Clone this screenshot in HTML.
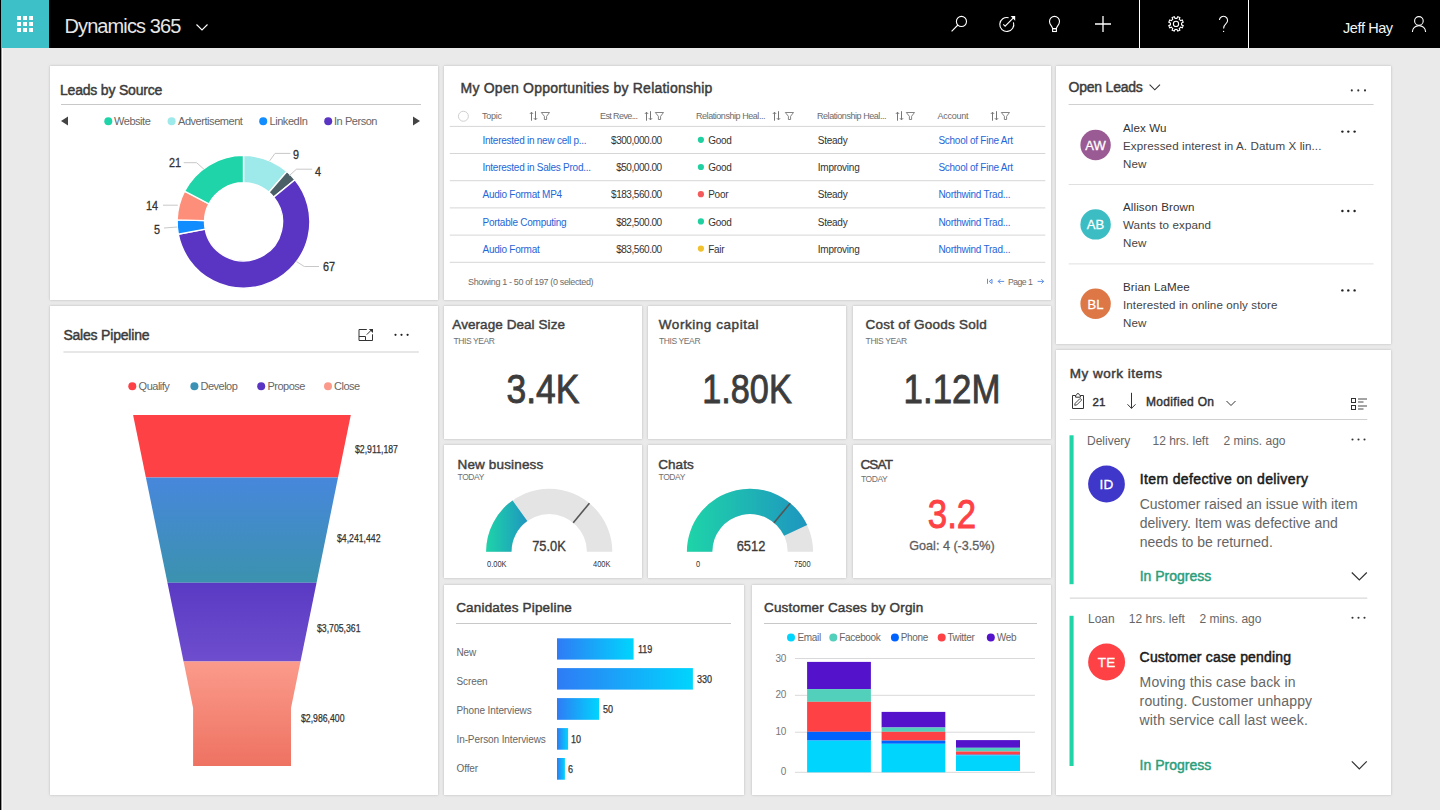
<!DOCTYPE html>
<html><head><meta charset="utf-8">
<style>
*{margin:0;padding:0;box-sizing:border-box}
html,body{width:1440px;height:810px;overflow:hidden;background:#eaeaea;font-family:"Liberation Sans",sans-serif;color:#333}
.abs{position:absolute}
#top{position:absolute;left:0;top:0;width:1440px;height:48px;background:#000}
#launch{position:absolute;left:1px;top:0;width:48px;height:48px;background:#3dc0c8}
.p{position:absolute;background:#fff;box-shadow:0 0 1px rgba(0,0,0,0.12),0 0 3px rgba(0,0,0,0.14)}
.t{position:absolute;white-space:nowrap}
.ttl{font-size:14px;font-weight:400;color:#3b3b3b;letter-spacing:-0.2px;line-height:18px;-webkit-text-stroke:0.45px #3b3b3b}
.hr{height:1px;background:#c8c8c8}
.lg{font-size:11px;color:#666;letter-spacing:-0.45px;line-height:13px}
.th{font-size:9px;color:#6b6b6b;letter-spacing:-0.25px;line-height:12px}
.td{font-size:10px;color:#333;letter-spacing:-0.25px;line-height:12px}
.num{letter-spacing:-0.45px}
.lk{color:#2566d8}
.ft{font-size:9px;color:#6b6b6b;letter-spacing:-0.35px;line-height:12px}
.av{font-size:13px;color:#fff;text-align:center;line-height:15px;letter-spacing:0.2px;-webkit-text-stroke:0.3px #fff}
.ld{font-size:11.6px;color:#444;line-height:14px;letter-spacing:0.1px}
.fl{font-size:10px;color:#333;line-height:12px;transform:scaleX(0.87) translateY(1px);transform-origin:0 0;-webkit-text-stroke:0.25px #333}
.kt{font-size:13.5px;font-weight:400;color:#3f3f3f;letter-spacing:0.07px;line-height:16px;-webkit-text-stroke:0.45px #3f3f3f}
.ks{font-size:8.5px;color:#707070;letter-spacing:-0.4px;line-height:10px}
.kn{width:198px;text-align:center;font-size:41px;color:#3c3c3c;line-height:46px;transform:scaleX(0.865);-webkit-text-stroke:0.9px currentColor}
.gv{font-size:15.5px;color:#3a3a3a;line-height:18px;-webkit-text-stroke:0.35px #3a3a3a;transform:translateX(-50%) scaleX(0.83)}
.gl{font-size:8.5px;color:#333;line-height:10px;transform:scaleX(0.88);transform-origin:0 0}
.cl{font-size:10px;color:#666;line-height:12px;letter-spacing:-0.1px}
.cv{font-size:10px;color:#333;line-height:12px;transform:scaleX(0.9);transform-origin:0 0;-webkit-text-stroke:0.25px #333}
.lg2{font-size:10px;color:#666;line-height:13px;letter-spacing:-0.35px}
.ax{font-size:10px;color:#777;line-height:12px;letter-spacing:-0.3px}
.wm{font-size:12px;color:#666;line-height:15px}
.wt{font-size:14px;font-weight:400;color:#1a1a1a;line-height:17px;-webkit-text-stroke:0.5px #1a1a1a}
.wd{font-size:14px;color:#666;line-height:18.9px}
.wp{font-size:14px;font-weight:400;color:#2b9e7b;line-height:17px;letter-spacing:0;-webkit-text-stroke:0.45px #2b9e7b}
.dl{font-size:12px;color:#333;line-height:14px;transform:scaleX(0.9) translateY(0.8px);transform-origin:0 0;-webkit-text-stroke:0.3px #333}
</style></head><body>
<div id="top">
  <div id="launch">
    <svg class="abs" style="left:15px;top:16px" width="17" height="17" viewBox="0 0 17 17" fill="#fff">
      <rect x="1" y="0" width="4" height="4"/><rect x="7" y="0" width="4" height="4"/><rect x="13" y="0" width="4" height="4"/>
      <rect x="1" y="6" width="4" height="4"/><rect x="7" y="6" width="4" height="4"/><rect x="13" y="6" width="4" height="4"/>
      <rect x="1" y="12" width="4" height="4"/><rect x="7" y="12" width="4" height="4"/><rect x="13" y="12" width="4" height="4"/>
    </svg>
  </div>
  <div class="t" style="left:64.5px;top:12.5px;font-size:20px;letter-spacing:-0.9px;color:#e6e6e6;line-height:26px">Dynamics 365</div>
  <svg class="abs" style="left:0;top:0" width="1440" height="48" fill="none" stroke="#fff" stroke-width="1.1">
    <path d="M196.5 24.5 L202 30 L207.5 24.5"/>
    <circle cx="961.45" cy="21.45" r="5.05"/><path d="M957.9 25 L951.6 31.3"/>
    <path d="M1013.45 22.3 A7 7 0 1 1 1008.6 17.7"/><path d="M1003.3 24.3 L1005.1 26.1 L1013.6 17.6"/><path d="M1010.6 16.1 L1015.2 16.1 L1015.2 20.7 Z" fill="#fff" stroke="none"/>
    <path d="M1052.6 28.6 C1052.6 26.4 1049.5 24.9 1049.5 21.4 A5 5 0 0 1 1059.5 21.4 C1059.5 24.9 1056.4 26.4 1056.4 28.6 Z"/><rect x="1052.6" y="28.6" width="3.8" height="2.9"/>
    <path d="M1095 24 H1111 M1103 16 V32" stroke-width="1.3"/>
    <path d="M1139.5 0 V48 M1248.5 0 V48" stroke-width="1"/>
    <path d="M1176.00 18.30 L1176.92 18.38 L1177.73 16.70 L1179.87 17.59 L1179.25 19.34 L1179.96 19.94 L1180.56 20.65 L1182.31 20.03 L1183.20 22.17 L1181.52 22.98 L1181.60 23.90 L1181.52 24.82 L1183.20 25.63 L1182.31 27.77 L1180.56 27.15 L1179.96 27.86 L1179.25 28.46 L1179.87 30.21 L1177.73 31.10 L1176.92 29.42 L1176.00 29.50 L1175.08 29.42 L1174.27 31.10 L1172.13 30.21 L1172.75 28.46 L1172.04 27.86 L1171.44 27.15 L1169.69 27.77 L1168.80 25.63 L1170.48 24.82 L1170.40 23.90 L1170.48 22.98 L1168.80 22.17 L1169.69 20.03 L1171.44 20.65 L1172.04 19.94 L1172.75 19.34 L1172.13 17.59 L1174.27 16.70 L1175.08 18.38 Z"/><circle cx="1176" cy="23.9" r="2.6"/>
    <path d="M1219.4 20 A4.1 4.1 0 1 1 1226 23.6 C1224.2 25.2 1223.6 26 1223.6 28.6"/><circle cx="1223.6" cy="31.4" r="0.65" fill="#fff" stroke="none"/>
    <circle cx="1418.9" cy="20.9" r="4.3"/><path d="M1412.4 31.9 A6.6 6.3 0 0 1 1425.6 31.9"/>
  </svg>
  <div class="t" style="left:1343px;top:18.5px;font-size:14.5px;letter-spacing:-0.4px;color:#f5f5f5;line-height:18px">Jeff Hay</div>
</div>

<!-- panels -->
<div class="abs" style="left:0;top:48px;width:1px;height:762px;background:#000"></div>
<div class="abs" style="left:1px;top:48px;width:1px;height:762px;background:#9a9a9a"></div>
<div class="abs" style="left:2px;top:48px;width:1px;height:762px;background:#fbfbfb"></div>
<div class="p" id="p-leads" style="left:50px;top:66px;width:388px;height:234px"></div>
<div class="p" id="p-opps" style="left:444px;top:66px;width:607px;height:234px"></div>
<div class="p" id="p-open" style="left:1056px;top:66px;width:335px;height:278px"></div>
<div class="p" id="p-sales" style="left:50px;top:306px;width:388px;height:489px"></div>
<div class="p" id="p-k1" style="left:444px;top:306px;width:198px;height:133px"></div>
<div class="p" id="p-k2" style="left:648px;top:306px;width:198px;height:133px"></div>
<div class="p" id="p-k3" style="left:853px;top:306px;width:198px;height:133px"></div>
<div class="p" id="p-g1" style="left:444px;top:445px;width:198px;height:133px"></div>
<div class="p" id="p-g2" style="left:648px;top:445px;width:198px;height:133px"></div>
<div class="p" id="p-g3" style="left:853px;top:445px;width:198px;height:133px"></div>
<div class="p" id="p-cand" style="left:444px;top:585px;width:300px;height:210px"></div>
<div class="p" id="p-cases" style="left:752px;top:585px;width:299px;height:210px"></div>
<div class="p" id="p-work" style="left:1056px;top:350px;width:335px;height:445px"></div>


<!-- LEADS BY SOURCE -->
<div class="t ttl" style="left:60px;top:81px">Leads by Source</div>
<div class="abs hr" style="left:61px;top:104px;width:360px"></div>
<svg class="abs" style="left:0;top:0" width="440" height="300">
  <path d="M61 121 L68 116.5 V125.5 Z" fill="#444"/>
  <path d="M420 121 L413 116.5 V125.5 Z" fill="#444"/>
  <circle cx="108.3" cy="121.3" r="4" fill="#1ed4a8"/>
  <circle cx="171.6" cy="121.3" r="4" fill="#9ee9e9"/>
  <circle cx="263.2" cy="121.3" r="4" fill="#118dff"/>
  <circle cx="328.2" cy="121.3" r="4" fill="#5a35c4"/>
  <path d="M243.50 155.40 A66.4 66.4 0 0 1 286.89 171.54 L268.98 192.28 A39.0 39.0 0 0 0 243.50 182.80 Z" fill="#9ee9e9" stroke="#fff" stroke-width="1.4"/>
<path d="M286.89 171.54 A66.4 66.4 0 0 1 294.96 179.83 L273.72 197.15 A39.0 39.0 0 0 0 268.98 192.28 Z" fill="#4a5f66" stroke="#fff" stroke-width="1.4"/>
<path d="M294.96 179.83 A66.4 66.4 0 1 1 178.28 234.24 L205.19 229.11 A39.0 39.0 0 1 0 273.72 197.15 Z" fill="#5a35c4" stroke="#fff" stroke-width="1.4"/>
<path d="M178.28 234.24 A66.4 66.4 0 0 1 177.13 219.83 L204.52 220.64 A39.0 39.0 0 0 0 205.19 229.11 Z" fill="#118dff" stroke="#fff" stroke-width="1.4"/>
<path d="M177.13 219.83 A66.4 66.4 0 0 1 184.55 191.24 L208.88 203.85 A39.0 39.0 0 0 0 204.52 220.64 Z" fill="#fd8f7a" stroke="#fff" stroke-width="1.4"/>
<path d="M184.55 191.24 A66.4 66.4 0 0 1 243.50 155.40 L243.50 182.80 A39.0 39.0 0 0 0 208.88 203.85 Z" fill="#1ed4a8" stroke="#fff" stroke-width="1.4"/>
  <g fill="none" stroke="#c8c8c8" stroke-width="1">
    <path d="M269.7 160.8 L275 153.4 H290.4"/>
    <path d="M289.4 175.6 L296.4 169.2 H312.2"/>
    <path d="M296.4 261.5 L304.3 266.5 H319"/>
    <path d="M203.9 169.2 L196.6 162.7 H183.7"/>
    <path d="M177.8 205.2 H163"/>
    <path d="M177.4 227 L164 228"/>
  </g>
</svg>
<div class="t lg" style="left:114px;top:115px">Website</div>
<div class="t lg" style="left:178px;top:115px">Advertisement</div>
<div class="t lg" style="left:269.5px;top:115px">LinkedIn</div>
<div class="t lg" style="left:334px;top:115px">In Person</div>
<div class="t dl" style="left:293px;top:147px">9</div>
<div class="t dl" style="left:314.5px;top:164px">4</div>
<div class="t dl" style="left:322.5px;top:259px">67</div>
<div class="t dl" style="left:169px;top:154.5px">21</div>
<div class="t dl" style="left:146px;top:197.5px">14</div>
<div class="t dl" style="left:153.5px;top:222px">5</div>

<!-- OPPORTUNITIES -->
<div class="t ttl" style="left:460.5px;top:79px;letter-spacing:0.23px">My Open Opportunities by Relationship</div>
<svg class="abs" style="left:444px;top:66px" width="607" height="234">
  <circle cx="19.4" cy="50.25" r="5" fill="none" stroke="#d0d0d0" stroke-width="1"/>
  <g fill="none" stroke="#777" stroke-width="1">
    <path d="M87.5 54.7 V46.3 M85.9 47.9 L87.5 46.2 L89.1 47.9 M91.5 45.2 V53.8 M89.9 52.2 L91.5 53.9 L93.1 52.2"/>
    <path d="M97.3 46.5 H105.5 L102.6 50.3 V53.5 H100.4 V50.3 Z" stroke-width="0.9"/>
    <path d="M202.5 54.7 V46.3 M200.9 47.9 L202.5 46.2 L204.1 47.9 M206.5 45.2 V53.8 M204.9 52.2 L206.5 53.9 L208.1 52.2"/>
    <path d="M211.3 46.5 H219.5 L216.6 50.3 V53.5 H214.4 V50.3 Z" stroke-width="0.9"/>
    <path d="M330.5 54.7 V46.3 M328.9 47.9 L330.5 46.2 L332.1 47.9 M334.5 45.2 V53.8 M332.9 52.2 L334.5 53.9 L336.1 52.2"/>
    <path d="M341.3 46.5 H349.5 L346.6 50.3 V53.5 H344.4 V50.3 Z" stroke-width="0.9"/>
    <path d="M453.5 54.7 V46.3 M451.9 47.9 L453.5 46.2 L455.1 47.9 M457.5 45.2 V53.8 M455.9 52.2 L457.5 53.9 L459.1 52.2"/>
    <path d="M462.3 46.5 H470.5 L467.6 50.3 V53.5 H465.4 V50.3 Z" stroke-width="0.9"/>
    <path d="M548.5 54.7 V46.3 M546.9 47.9 L548.5 46.2 L550.1 47.9 M552.5 45.2 V53.8 M550.9 52.2 L552.5 53.9 L554.1 52.2"/>
    <path d="M557.3 46.5 H565.5 L562.6 50.3 V53.5 H560.4 V50.3 Z" stroke-width="0.9"/>
  </g>
  <rect x="5.8" y="59.9" width="595.5" height="1" fill="#d6d6d6"/>
  <rect x="5.8" y="87.0" width="595.5" height="1" fill="#d6d6d6"/>
  <rect x="5.8" y="114.2" width="595.5" height="1" fill="#d6d6d6"/>
  <rect x="5.8" y="141.4" width="595.5" height="1" fill="#d6d6d6"/>
  <rect x="5.8" y="168.6" width="595.5" height="1" fill="#d6d6d6"/>
  <rect x="5.8" y="195.8" width="595.5" height="1" fill="#d6d6d6"/>
  <circle cx="256.9" cy="73.8" r="3.1" fill="#1fd0a0"/>
  <circle cx="256.9" cy="101.0" r="3.1" fill="#1fd0a0"/>
  <circle cx="256.9" cy="128.2" r="3.1" fill="#f45a5a"/>
  <circle cx="256.9" cy="155.4" r="3.1" fill="#1fd0a0"/>
  <circle cx="256.9" cy="182.6" r="3.1" fill="#f2c12e"/>
  <g fill="none" stroke="#4a82e0" stroke-width="0.9">
    <path d="M543.5 212.8 V217.8"/><path d="M548 213.3 L545.2 215.4 L548 217.5 Z"/>
    <path d="M560.2 215.4 H554.2 M556.4 213.2 L554.2 215.4 L556.4 217.6"/>
    <path d="M593.6 215.4 H599.6 M597.4 213.2 L599.6 215.4 L597.4 217.6"/>
  </g>
</svg>
<div class="t th" style="left:482px;top:110px">Topic</div>
<div class="t th" style="left:600px;top:110px;letter-spacing:-0.6px">Est Reve...</div>
<div class="t th" style="left:696px;top:110px;letter-spacing:-0.45px">Relationship Heal...</div>
<div class="t th" style="left:817px;top:110px;letter-spacing:-0.45px">Relationship Heal...</div>
<div class="t th" style="left:937.5px;top:110px">Account</div>
<div class="t td lk" style="left:482.5px;top:135.0px">Interested in new cell p...</div>
<div class="t td num" style="right:778.3px;top:135.0px">$300,000.00</div>
<div class="t td" style="left:708.2px;top:135.0px">Good</div>
<div class="t td" style="left:817.8px;top:135.0px">Steady</div>
<div class="t td lk" style="left:938.4px;top:135.0px">School of Fine Art</div>
<div class="t td lk" style="left:482.5px;top:162.2px">Interested in Sales Prod...</div>
<div class="t td num" style="right:778.3px;top:162.2px">$50,000.00</div>
<div class="t td" style="left:708.2px;top:162.2px">Good</div>
<div class="t td" style="left:817.8px;top:162.2px">Improving</div>
<div class="t td lk" style="left:938.4px;top:162.2px">School of Fine Art</div>
<div class="t td lk" style="left:482.5px;top:189.4px">Audio Format MP4</div>
<div class="t td num" style="right:778.3px;top:189.4px">$183,560.00</div>
<div class="t td" style="left:708.2px;top:189.4px">Poor</div>
<div class="t td" style="left:817.8px;top:189.4px">Steady</div>
<div class="t td lk" style="left:938.4px;top:189.4px">Northwind Trad...</div>
<div class="t td lk" style="left:482.5px;top:216.6px">Portable Computing</div>
<div class="t td num" style="right:778.3px;top:216.6px">$82,500.00</div>
<div class="t td" style="left:708.2px;top:216.6px">Good</div>
<div class="t td" style="left:817.8px;top:216.6px">Steady</div>
<div class="t td lk" style="left:938.4px;top:216.6px">Northwind Trad...</div>
<div class="t td lk" style="left:482.5px;top:243.8px">Audio Format</div>
<div class="t td num" style="right:778.3px;top:243.8px">$83,560.00</div>
<div class="t td" style="left:708.2px;top:243.8px">Fair</div>
<div class="t td" style="left:817.8px;top:243.8px">Improving</div>
<div class="t td lk" style="left:938.4px;top:243.8px">Northwind Trad...</div>
<div class="t ft" style="left:468px;top:276px">Showing 1 - 50 of 197 (0 selected)</div>
<div class="t ft" style="left:1008px;top:276px;font-size:8.7px;letter-spacing:-0.55px">Page 1</div>

<!-- OPEN LEADS -->
<div class="t ttl" style="left:1068.6px;top:78px;letter-spacing:-0.23px">Open Leads</div>
<svg class="abs" style="left:1056px;top:66px" width="335" height="278">
  <path d="M93.6 18.6 L98.8 23.8 L104 18.6" fill="none" stroke="#333" stroke-width="1.1"/>
  <g fill="#333"><circle cx="295.8" cy="24.4" r="1.05"/><circle cx="302.3" cy="24.4" r="1.05"/><circle cx="309" cy="24.4" r="1.05"/></g>
  <rect x="12.6" y="38" width="305" height="1" fill="#d0d0d0"/>
  <circle cx="39.6" cy="79.0" r="15.2" fill="#9a5a93"/>
  <g fill="#222"><circle cx="286.4" cy="65.6" r="1.2"/><circle cx="292.3" cy="65.6" r="1.2"/><circle cx="298.6" cy="65.6" r="1.2"/></g>
  <rect x="12.6" y="118.0" width="305" height="1" fill="#e0e0e0"/>
  <circle cx="39.6" cy="158.4" r="15.2" fill="#3bbdc3"/>
  <g fill="#222"><circle cx="286.4" cy="145.0" r="1.2"/><circle cx="292.3" cy="145.0" r="1.2"/><circle cx="298.6" cy="145.0" r="1.2"/></g>
  <rect x="12.6" y="197.4" width="305" height="1" fill="#e0e0e0"/>
  <circle cx="39.6" cy="237.8" r="15.2" fill="#dd7745"/>
  <g fill="#222"><circle cx="286.4" cy="224.4" r="1.2"/><circle cx="292.3" cy="224.4" r="1.2"/><circle cx="298.6" cy="224.4" r="1.2"/></g>
</svg>
<div class="t av" style="left:1080.4px;width:30.4px;top:138.0px">AW</div>
<div class="t ld" style="left:1123px;top:121.0px;color:#333">Alex Wu</div>
<div class="t ld" style="left:1123px;top:139.0px">Expressed interest in A. Datum X lin...</div>
<div class="t ld" style="left:1123px;top:156.8px">New</div>
<div class="t av" style="left:1080.4px;width:30.4px;top:217.4px">AB</div>
<div class="t ld" style="left:1123px;top:200.4px;color:#333">Allison Brown</div>
<div class="t ld" style="left:1123px;top:218.4px">Wants to expand</div>
<div class="t ld" style="left:1123px;top:236.2px">New</div>
<div class="t av" style="left:1080.4px;width:30.4px;top:296.8px">BL</div>
<div class="t ld" style="left:1123px;top:279.8px;color:#333">Brian LaMee</div>
<div class="t ld" style="left:1123px;top:297.8px">Interested in online only store</div>
<div class="t ld" style="left:1123px;top:315.6px">New</div>

<!-- SALES PIPELINE -->
<div class="t ttl" style="left:63.4px;top:326px">Sales Pipeline</div>
<svg class="abs" style="left:0;top:0" width="440" height="800">
  <defs>
    <linearGradient id="gB" x1="0" y1="0" x2="0" y2="1"><stop offset="0" stop-color="#4787dc"/><stop offset="1" stop-color="#3b92ae"/></linearGradient>
    <linearGradient id="gP" x1="0" y1="0" x2="0" y2="1"><stop offset="0" stop-color="#5a3ac3"/><stop offset="1" stop-color="#6e4ecd"/></linearGradient>
    <linearGradient id="gS" x1="0" y1="0" x2="0" y2="1"><stop offset="0" stop-color="#fb9b8b"/><stop offset="1" stop-color="#ee7262"/></linearGradient>
  </defs>
  <g fill="none" stroke="#333" stroke-width="1">
    <path d="M366.8 329.5 H359 V340.5 H372.5 V334.3"/>
    <path d="M359 336.5 H365.5 V340.5"/>
    <path d="M366.8 334.6 L371.6 329.8"/>
  </g>
  <path d="M368.8 328.9 H373 V333.1 Z" fill="#333"/>
  <g fill="#222"><circle cx="395.5" cy="334.8" r="1.1"/><circle cx="401.5" cy="334.8" r="1.1"/><circle cx="407.6" cy="334.8" r="1.1"/></g>
  <rect x="63.4" y="351.5" width="355.4" height="1" fill="#d0d0d0"/>
  <circle cx="132.3" cy="386.2" r="4" fill="#fd4145"/>
  <circle cx="194.4" cy="386.2" r="4" fill="#3b92b4"/>
  <circle cx="261.2" cy="386.2" r="4" fill="#5a35c4"/>
  <circle cx="328" cy="386.2" r="4" fill="#fb9a8a"/>
  <path d="M133.10 414.9 H350.80 L338.03 477.5 H145.91 Z" fill="#fe4145"/>
  <path d="M145.91 477.5 H338.03 L316.57 582.7 H167.45 Z" fill="url(#gB)"/>
  <path d="M167.45 582.7 H316.57 L300.51 661.4 H183.56 Z" fill="url(#gP)"/>
  <path d="M183.56 661.4 H300.51 L291.01 708 V766 H193.10 V708 Z" fill="url(#gS)"/>
</svg>
<div class="t lg" style="left:138.6px;top:380px;letter-spacing:-0.5px">Qualify</div>
<div class="t lg" style="left:200.5px;top:380px;letter-spacing:-0.5px">Develop</div>
<div class="t lg" style="left:267.5px;top:380px;letter-spacing:-0.5px">Propose</div>
<div class="t lg" style="left:334px;top:380px;letter-spacing:-0.5px">Close</div>
<div class="t fl" style="left:354.6px;top:443px">$2,911,187</div>
<div class="t fl" style="left:337px;top:531.5px">$4,241,442</div>
<div class="t fl" style="left:316.7px;top:621.5px">$3,705,361</div>
<div class="t fl" style="left:300.7px;top:712.3px">$2,986,400</div>

<!-- KPIs -->
<div class="t kt" style="left:452.3px;top:317px">Average Deal Size</div>
<div class="t ks" style="left:453.4px;top:336px">THIS YEAR</div>
<div class="t kn" style="left:444px;top:366px">3.4K</div>
<div class="t kt" style="left:658.8px;top:317px;letter-spacing:0.55px">Working capital</div>
<div class="t ks" style="left:659px;top:336px">THIS YEAR</div>
<div class="t kn" style="left:648px;top:366px;transform:scaleX(0.835)">1.80K</div>
<div class="t kt" style="left:865.4px;top:317px;letter-spacing:0.25px">Cost of Goods Sold</div>
<div class="t ks" style="left:865.6px;top:336px">THIS YEAR</div>
<div class="t kn" style="left:853px;top:366px;transform:scaleX(0.85)">1.12M</div>

<svg class="abs" style="left:0;top:0" width="1060" height="600">
  <defs><linearGradient id="gg1" gradientUnits="userSpaceOnUse" x1="486.1" y1="0" x2="527.3" y2="0"><stop offset="0" stop-color="#1ed4a8"/><stop offset="1" stop-color="#1e96c0"/></linearGradient><linearGradient id="gg2" gradientUnits="userSpaceOnUse" x1="686.9" y1="0" x2="807.1" y2="0"><stop offset="0" stop-color="#1ed4a8"/><stop offset="1" stop-color="#1e96c0"/></linearGradient></defs>
  <path d="M486.10 551.80 A63.1 63.1 0 0 1 612.30 551.80 L586.90 551.80 A37.7 37.7 0 0 0 511.50 551.80 Z" fill="#e4e4e4"/><path d="M486.10 551.80 A63.1 63.1 0 0 1 512.56 500.43 L527.31 521.11 A37.7 37.7 0 0 0 511.50 551.80 Z" fill="url(#gg1)"/><path d="M573.23 522.75 L589.42 503.18" stroke="#555" stroke-width="1.6"/>
  <path d="M686.90 551.80 A63.1 63.1 0 0 1 813.10 551.80 L787.70 551.80 A37.7 37.7 0 0 0 712.30 551.80 Z" fill="#e4e4e4"/><path d="M686.90 551.80 A63.1 63.1 0 0 1 807.14 525.03 L784.14 535.81 A37.7 37.7 0 0 0 712.30 551.80 Z" fill="url(#gg2)"/><path d="M774.03 522.75 L790.22 503.18" stroke="#555" stroke-width="1.6"/>
</svg>
<div class="t kt" style="left:457.5px;top:456.7px;letter-spacing:0.15px">New business</div>
<div class="t ks" style="left:457.5px;top:472.3px">TODAY</div>
<div class="t gv" style="left:549.2px;top:537px">75.0K</div>
<div class="t gl" style="left:487px;top:559.2px">0.00K</div>
<div class="t gl" style="left:592.6px;top:559.2px">400K</div>
<div class="t kt" style="left:658.2px;top:456.7px">Chats</div>
<div class="t ks" style="left:658.5px;top:472.3px">TODAY</div>
<div class="t gv" style="left:751px;top:537px">6512</div>
<div class="t gl" style="left:696px;top:559.2px">0</div>
<div class="t gl" style="left:794.1px;top:559.2px">7500</div>
<div class="t kt" style="left:860.4px;top:456.7px;letter-spacing:-0.8px">CSAT</div>
<div class="t ks" style="left:860.9px;top:474.3px">TODAY</div>
<div class="t kn" style="left:853px;top:490.5px;font-size:40px;color:#fd4145;transform:scaleX(0.87)">3.2</div>
<div class="t" style="left:853px;width:198px;text-align:center;top:538px;font-size:13px;color:#5e5e5e;line-height:15px;transform:scaleX(0.97);-webkit-text-stroke:0.3px #5e5e5e">Goal: 4 (-3.5%)</div>

<!-- CANDIDATES -->
<div class="t ttl" style="left:456.2px;top:598.8px;font-size:13.5px;letter-spacing:0.18px">Canidates Pipeline</div>
<div class="abs hr" style="left:456.2px;top:623px;width:275px"></div>
<svg class="abs" style="left:0;top:0" width="1060" height="800">
  <defs>
    <linearGradient id="cb0" gradientUnits="userSpaceOnUse" x1="557" y1="0" x2="633.6" y2="0"><stop offset="0" stop-color="#2f7bf5"/><stop offset="1" stop-color="#00d5fd"/></linearGradient>
    <linearGradient id="cb1" gradientUnits="userSpaceOnUse" x1="557" y1="0" x2="692.9" y2="0"><stop offset="0" stop-color="#2f7bf5"/><stop offset="1" stop-color="#00d5fd"/></linearGradient>
    <linearGradient id="cb2" gradientUnits="userSpaceOnUse" x1="557" y1="0" x2="599.1" y2="0"><stop offset="0" stop-color="#2f7bf5"/><stop offset="1" stop-color="#00d5fd"/></linearGradient>
    <linearGradient id="cb3" gradientUnits="userSpaceOnUse" x1="557" y1="0" x2="568.1" y2="0"><stop offset="0" stop-color="#2f7bf5"/><stop offset="1" stop-color="#00d5fd"/></linearGradient>
    <linearGradient id="cb4" gradientUnits="userSpaceOnUse" x1="557" y1="0" x2="564.9" y2="0"><stop offset="0" stop-color="#2f7bf5"/><stop offset="1" stop-color="#00d5fd"/></linearGradient>
  </defs>
  <rect x="557" y="638.3" width="76.6" height="21.3" fill="url(#cb0)"/>
  <rect x="557" y="668.1" width="135.9" height="21.5" fill="url(#cb1)"/>
  <rect x="557" y="698.1" width="42.1" height="21.7" fill="url(#cb2)"/>
  <rect x="557" y="728.1" width="11.1" height="21.6" fill="url(#cb3)"/>
  <rect x="557" y="758" width="7.9" height="21.7" fill="url(#cb4)"/>
  <g fill="#d9d9d9">
    <rect x="794.9" y="658.0" width="240" height="1"/>
    <rect x="794.9" y="694.8" width="240" height="1"/>
    <rect x="794.9" y="731.7" width="240" height="1"/>
    <rect x="794.9" y="771.8" width="240" height="1"/>
  </g>
  <rect x="807.1" y="661.9" width="63.8" height="27.2" fill="#5412ca"/>
  <rect x="807.1" y="689.1" width="63.8" height="12.7" fill="#52d0bb"/>
  <rect x="807.1" y="701.8" width="63.8" height="30.0" fill="#fd4145"/>
  <rect x="807.1" y="731.8" width="63.8" height="8.8" fill="#0063ff"/>
  <rect x="807.1" y="740.6" width="63.8" height="31.7" fill="#00d5fd"/>
  <rect x="881.6" y="711.9" width="63.7" height="15.6" fill="#5412ca"/>
  <rect x="881.6" y="727.5" width="63.7" height="4.3" fill="#52d0bb"/>
  <rect x="881.6" y="731.8" width="63.7" height="8.8" fill="#fd4145"/>
  <rect x="881.6" y="740.6" width="63.7" height="3.2" fill="#0063ff"/>
  <rect x="881.6" y="743.8" width="63.7" height="28.5" fill="#00d5fd"/>
  <rect x="956" y="740.1" width="64.0" height="7.7" fill="#5412ca"/>
  <rect x="956" y="747.8" width="64.0" height="3.7" fill="#52d0bb"/>
  <rect x="956" y="751.5" width="64.0" height="3.2" fill="#fd4145"/>
  <rect x="956" y="754.7" width="64.0" height="0.6" fill="#0063ff"/>
  <rect x="956" y="755.3" width="64.0" height="15.7" fill="#00d5fd"/>
  <circle cx="791" cy="637.6" r="4" fill="#00d5fd"/>
  <circle cx="833.3" cy="637.6" r="4" fill="#52d0bb"/>
  <circle cx="894.9" cy="637.6" r="4" fill="#0063ff"/>
  <circle cx="941.7" cy="637.6" r="4" fill="#fd4145"/>
  <circle cx="990.8" cy="637.6" r="4" fill="#5412ca"/>
</svg>
<div class="t cl" style="left:456.5px;top:646.6px">New</div>
<div class="t cv" style="left:637.8px;top:644.0px">119</div>
<div class="t cl" style="left:456.5px;top:676.2px">Screen</div>
<div class="t cv" style="left:697.1px;top:673.8px">330</div>
<div class="t cl" style="left:456.5px;top:705.2px">Phone Interviews</div>
<div class="t cv" style="left:603.3px;top:703.8px">50</div>
<div class="t cl" style="left:456.5px;top:734.3px">In-Person Interviews</div>
<div class="t cv" style="left:571.1px;top:733.8px">10</div>
<div class="t cl" style="left:456.5px;top:763.1px">Offer</div>
<div class="t cv" style="left:567.9px;top:763.7px">6</div>

<!-- CASES -->
<div class="t ttl" style="left:764px;top:598.8px;font-size:13.5px;letter-spacing:0.18px">Customer Cases by Orgin</div>
<div class="abs hr" style="left:764px;top:623px;width:273.4px"></div>
<div class="t lg2" style="left:797.5px;top:631px">Email</div>
<div class="t lg2" style="left:839.3px;top:631px">Facebook</div>
<div class="t lg2" style="left:900.7px;top:631px">Phone</div>
<div class="t lg2" style="left:947.4px;top:631px">Twitter</div>
<div class="t lg2" style="left:996.8px;top:631px">Web</div>
<div class="t ax" style="right:654px;top:652.5px">30</div>
<div class="t ax" style="right:654px;top:689.3px">20</div>
<div class="t ax" style="right:654px;top:726.2px">10</div>
<div class="t ax" style="right:654px;top:766px">0</div>

<!-- WORK ITEMS -->
<div class="t ttl" style="left:1069.8px;top:365px;font-size:13.5px;letter-spacing:0.5px">My work items</div>
<svg class="abs" style="left:1056px;top:350px" width="335" height="445">
  <g fill="none" stroke="#333" stroke-width="1">
    <path d="M19.6 45.5 H16.5 V58.5 H27.5 V45.5 H24.4"/><path d="M19.6 45.5 C20.3 45.5 20.5 45 20.6 44.6 C21 43.1 22.9 43.1 23.3 44.6 C23.4 45 23.6 45.5 24.4 45.5 V47.2 H19.6 Z"/><path d="M18.7 55.3 L19.2 53.3 L23.6 48.9 A1.15 1.15 0 0 1 25.2 50.5 L20.8 54.9 Z" stroke-width="0.9"/>
    <path d="M75.5 42.8 V58.3 M71.5 54.3 L75.5 58.4 L79.5 54.3"/>
    <path d="M170.5 51 L175 55.5 L179.5 51"/>
    <rect x="295.5" y="48.5" width="4" height="4"/><rect x="295.5" y="55.5" width="4" height="4"/>
    <path d="M302 49 H311 M302 52 H307.5 M302 56 H311 M302 59 H307.5" stroke-width="0.9"/>
  </g>
  <rect x="13.8" y="69" width="297.5" height="1" fill="#d0d0d0"/>
  <rect x="13.5" y="85.3" width="4.1" height="148.9" fill="#20d4a8"/>
  <g fill="#333"><circle cx="296.5" cy="89.5" r="1.05"/><circle cx="302.5" cy="89.5" r="1.05"/><circle cx="308.5" cy="89.5" r="1.05"/></g>
  <circle cx="50.5" cy="134" r="18.4" fill="#3f37c9"/>
  <path d="M310.8 222.5 L303.3 230 L295.8 222.5" fill="none" stroke="#333" stroke-width="1.2"/>
  <rect x="13.8" y="247.6" width="297.5" height="1" fill="#d0d0d0"/>
  <rect x="13.5" y="265.8" width="4.1" height="150.2" fill="#20d4a8"/>
  <g fill="#333"><circle cx="296.5" cy="267.7" r="1.05"/><circle cx="302.5" cy="267.7" r="1.05"/><circle cx="308.5" cy="267.7" r="1.05"/></g>
  <circle cx="50.6" cy="312" r="18.5" fill="#fd4145"/>
  <path d="M310.8 411.3 L303.3 418.8 L295.8 411.3" fill="none" stroke="#333" stroke-width="1.2"/>
</svg>
<div class="t" style="left:1092.5px;top:394.5px;font-size:11.5px;color:#333;line-height:14px;-webkit-text-stroke:0.45px #333">21</div>
<div class="t" style="left:1146px;top:394.5px;font-size:12px;color:#333;line-height:14px;letter-spacing:0.33px;-webkit-text-stroke:0.45px #333">Modified On</div>

<div class="t wm" style="left:1087px;top:434px">Delivery</div>
<div class="t wm" style="left:1152.5px;top:434px">12 hrs. left</div>
<div class="t wm" style="left:1223.5px;top:434px">2 mins. ago</div>
<div class="t av" style="left:1088px;width:37px;top:476.5px;font-size:13.5px">ID</div>
<div class="t wt" style="left:1139.7px;top:471px;letter-spacing:0.38px">Item defective on delivery</div>
<div class="t wd" style="left:1139.7px;top:495px">Customer raised an issue with item<br>delivery. Item was defective and<br>needs to be returned.</div>
<div class="t wp" style="left:1139.7px;top:567.5px">In Progress</div>

<div class="t wm" style="left:1088px;top:611.8px">Loan</div>
<div class="t wm" style="left:1128.8px;top:611.8px">12 hrs. left</div>
<div class="t wm" style="left:1199.4px;top:611.8px">2 mins. ago</div>
<div class="t av" style="left:1088.1px;width:37px;top:654.5px;font-size:13.5px">TE</div>
<div class="t wt" style="left:1139.6px;top:648.5px;letter-spacing:0.18px">Customer case pending</div>
<div class="t wd" style="left:1139.6px;top:673px;letter-spacing:0.15px">Moving this case back in<br>routing. Customer unhappy<br>with service call last week.</div>
<div class="t wp" style="left:1139.6px;top:756.5px">In Progress</div>
</body></html>
